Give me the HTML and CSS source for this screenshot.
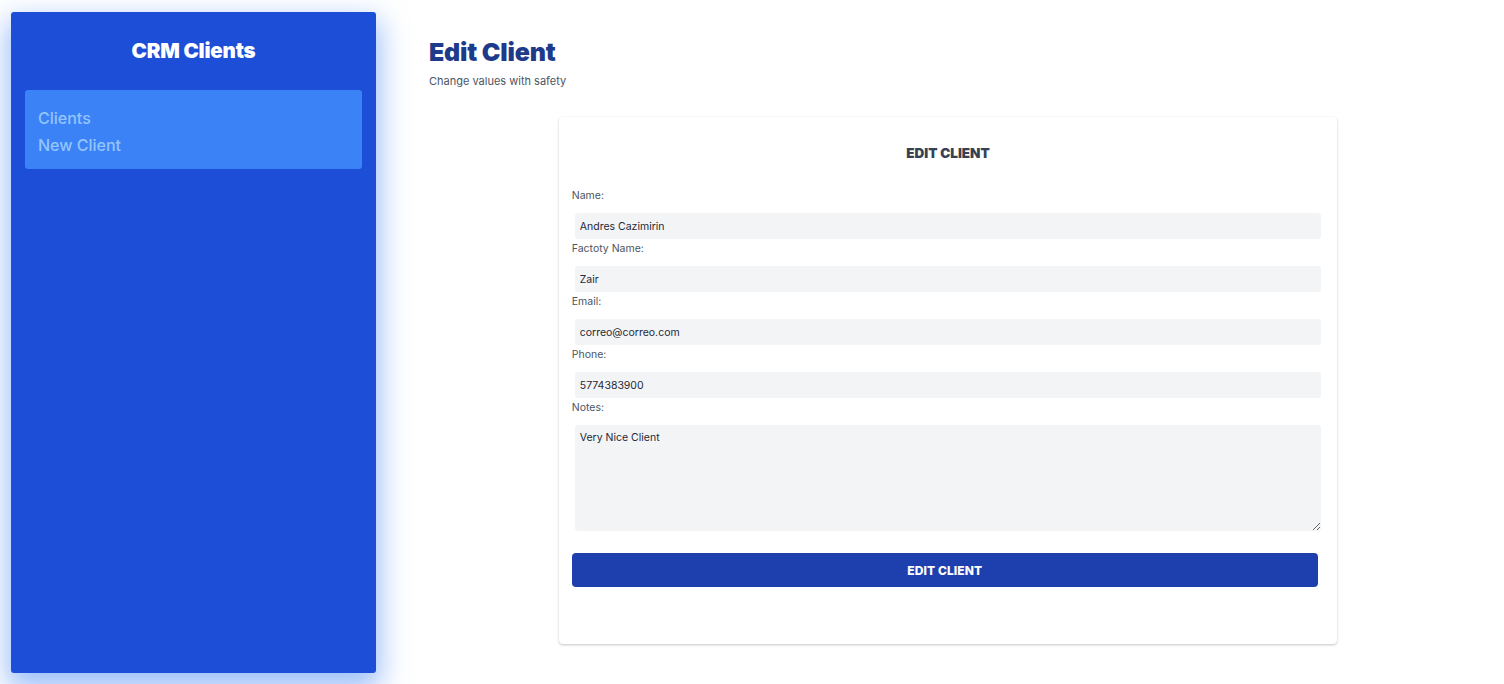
FILE: index.html
```html
<!DOCTYPE html>
<html lang="en">
<head>
<meta charset="utf-8">
<title>CRM Clients</title>
<link rel="stylesheet" href="styles.css">
</head>
<body>
<div class="layout">
  <aside class="sidebar">
    <h2 class="brand">CRM Clients</h2>
    <nav class="nav">
      <a class="nav-link" href="#">Clients</a>
      <a class="nav-link" href="#">New Client</a>
    </nav>
  </aside>
  <main class="main">
    <h1 class="page-title">Edit Client</h1>
    <p class="page-sub">Change values with safety</p>
    <div class="card">
      <h3 class="card-title">EDIT CLIENT</h3>
      <form class="form">
        <label class="label" for="name">Name:</label>
        <input class="field" id="name" type="text" value="Andres Cazimirin">
        <label class="label" for="factory">Factoty Name:</label>
        <input class="field" id="factory" type="text" value="Zair">
        <label class="label" for="email">Email:</label>
        <input class="field" id="email" type="text" value="correo@correo.com">
        <label class="label" for="phone">Phone:</label>
        <input class="field" id="phone" type="text" value="5774383900">
        <label class="label" for="notes">Notes:</label>
        <textarea class="field area" id="notes">Very Nice Client</textarea>
        <button class="btn" type="button">EDIT CLIENT</button>
      </form>
    </div>
  </main>
</div>
</body>
</html>
```

FILE: styles.css
```css
* { box-sizing: border-box; }
html, body { margin: 0; padding: 0; background: #ffffff; }
body { font-family: Inter, "Open Sans", "Liberation Sans", sans-serif; color: #374151; }

.layout { display: flex; height: 100vh; }

.sidebar {
  width: 365px;
  flex: 0 0 365px;
  margin: 12px 0 11px 11px;
  background: #1d4ed8;
  border-radius: 3px;
  padding: 25px 14px 0 14px;
  box-shadow: 0 12px 28px 4px rgba(59, 130, 246, 0.5);
}
.brand {
  margin: 0;
  text-align: center;
  color: #ffffff;
  font-weight: 900;
  font-size: 20.5px;
  line-height: 28px;
  letter-spacing: -0.2px;
}
.nav {
  margin-top: 25px;
  background: #3b82f6;
  border-radius: 3px;
  padding: 15px 13px 10px;
  display: flex;
  flex-direction: column;
}
.nav-link {
  color: #93c5fd;
  text-decoration: none;
  font-size: 16px;
  line-height: 27px;
  font-weight: 500;
}

.main {
  flex: 1;
  padding: 36px 37px 0 53px;
}
.page-title {
  margin: 0;
  color: #1e3a8a;
  font-weight: 900;
  font-size: 25px;
  line-height: 32px;
  letter-spacing: -0.2px;
}
.page-sub {
  margin: 6px 0 0;
  font-size: 11px;
  line-height: 14px;
  color: #4b5563;
}
.card {
  width: 75%;
  margin: 29px auto 0;
  height: 527px;
  background: #ffffff;
  border-radius: 4px;
  box-shadow: 0 1px 3px rgba(0,0,0,0.18), 0 1px 2px rgba(0,0,0,0.06);
  padding: 26px 13px 0;
}
.card-title {
  margin: 0;
  text-align: center;
  font-size: 13.5px;
  line-height: 20px;
  font-weight: 900;
  color: #374151;
}
.form { display: flex; flex-direction: column; margin-top: 25px; }
.label {
  font-size: 10.5px;
  line-height: 16px;
  color: #4b5563;
  margin-bottom: 9px;
}
.field {
  display: block;
  width: 746px;
  height: 26px;
  margin: 0 0 2px 3px;
  border: 0;
  border-radius: 3px;
  background: #f3f4f6;
  padding: 0 5px;
  font-family: inherit;
  font-size: 10.5px;
  color: #1f2937;
  outline: none;
}
.area {
  height: 106px;
  padding-top: 6px;
  resize: vertical;
  margin-bottom: 0;
}
.btn {
  margin-top: 22px;
  width: 746px;
  height: 34px;
  border: 0;
  border-radius: 4px;
  background: #1e40af;
  color: #ffffff;
  font-family: inherit;
  font-weight: 800;
  font-size: 12px;
  letter-spacing: 0.1px;
}
```
